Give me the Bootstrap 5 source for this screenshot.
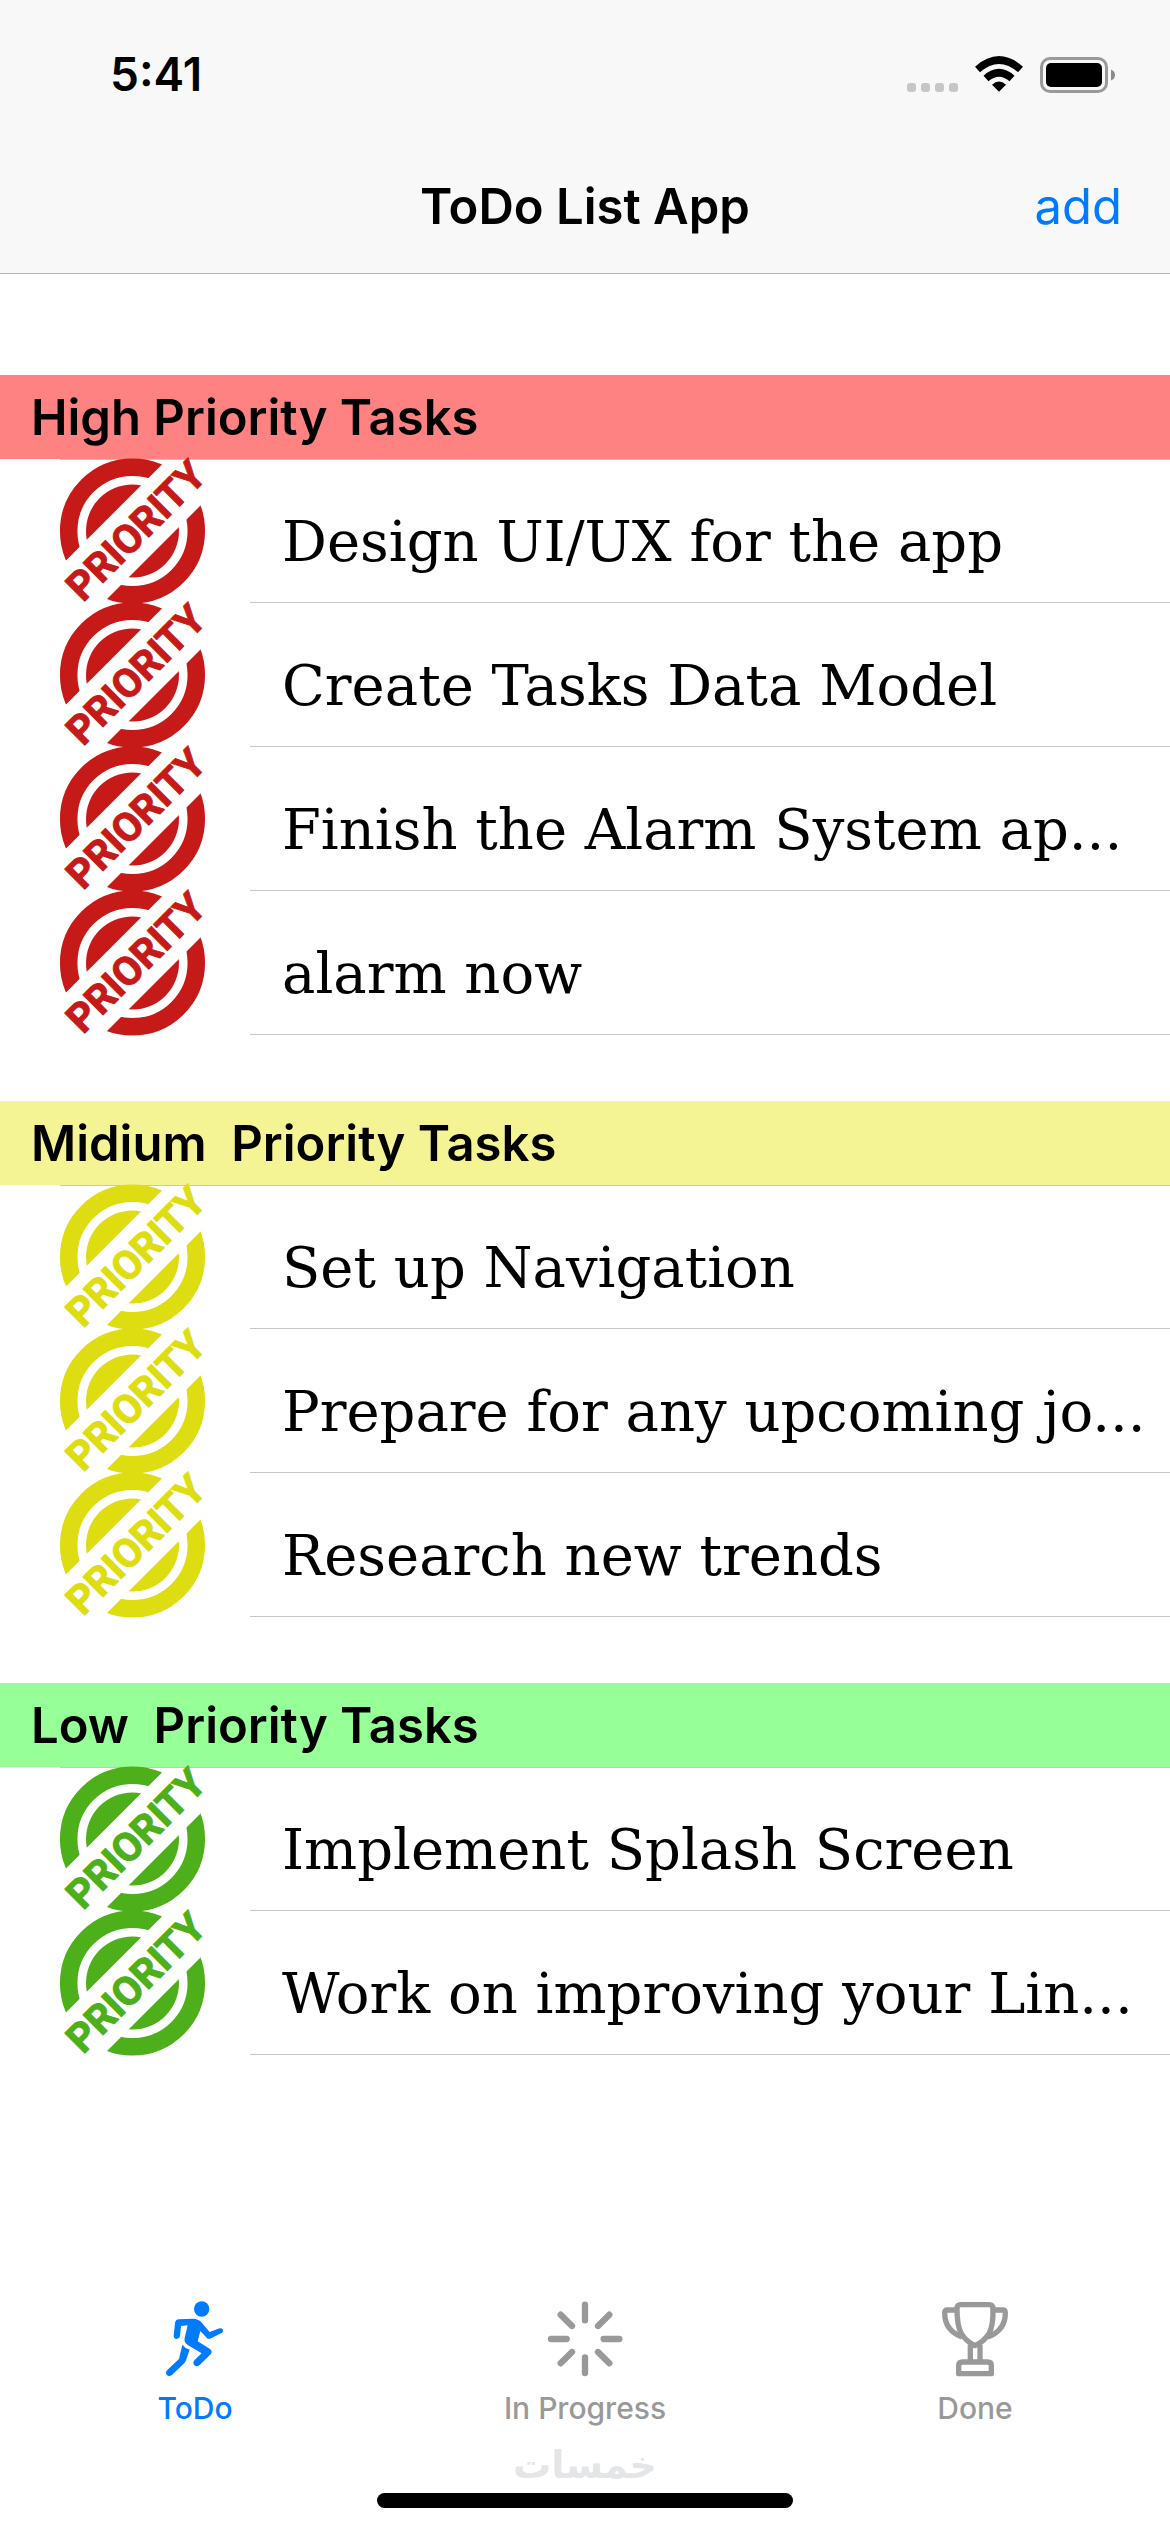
<!DOCTYPE html>
<html lang="en">
<head>
<meta charset="utf-8">
<meta name="viewport" content="width=device-width, initial-scale=1">
<title>ToDo List App</title>
<link href="https://cdn.jsdelivr.net/npm/bootstrap@5.3.0/dist/css/bootstrap.min.css" rel="stylesheet">
<style>
  body { font-family: Inter, "Liberation Sans", sans-serif; color: #000; background: #fff; }
  .app-top { background: #f8f8f8; border-bottom: 1px solid #b2b2b2; }
  .status-bar { height: 141px; padding: 6px 55px 0 110px; font-size: 46px; line-height: 56px; }
  .title-bar { height: 132px; padding: 0 48px; font-size: 49px; line-height: 60px; }
  .title-bar h1, .title-bar .btn { font-size: inherit; line-height: inherit; }
  .title-bar .btn { color: #007aff; }
  .task-lists { padding-top: 101px; gap: 66px; }
  .group-title { padding: 13px 31px 11px; }
  .group-title h2 { font-size: 49px; line-height: 60px; white-space: pre; }
  .level-high .group-title { background: #ff8282; }
  .level-mid .group-title { background: #f5f495; }
  .level-low .group-title { background: #97ff97; }
  .level-high .stamp { color: #c61a18; }
  .level-mid .stamp { color: #dddd12; }
  .level-low .stamp { color: #4daf19; }
  .task { height: 144px; padding-left: 60px; }
  .task:first-child { background: linear-gradient(#c6c6c8, #c6c6c8) no-repeat 60px 0 / 100% 1px; }
  .stamp { width: 145px; height: 144px; flex: none; display: block; overflow: visible; }
  .stamp-word { font: bold 40px Roboto, sans-serif; }
  .task-name { margin-left: 45px; padding: 23px 0 0 32px; border-bottom: 1px solid #c6c6c8;
    font-family: "DejaVu Serif", serif; font-size: 56px; line-height: 120px; }
  .tab-area { padding-bottom: 24px; }
  .tab-area a { padding-top: 18px; gap: 13px; font-size: 30px; line-height: 36px; font-weight: 500; color: #999; }
  .tab-area a.active { color: #007aff; }
  .watermark { font-family: "DejaVu Sans", sans-serif; font-weight: bold; font-size: 38px; line-height: 56px; color: #e4e5e7; margin-top: 11px; }
  .home-bar { width: 416px; height: 15px; background: #000; }
</style>
<script src="https://cdn.jsdelivr.net/npm/bootstrap@5.3.0/dist/js/bootstrap.bundle.min.js"></script>
</head>
<body class="d-flex flex-column min-vh-100">
<svg width="0" height="0" class="position-absolute" aria-hidden="true">
  <defs>
    <clipPath id="sides"><path d="M-40 147.500 L147.500 -40 H-40Z M185 2 L2 185 H185Z"/></clipPath>
    <g id="stamp">
      <g clip-path="url(#sides)">
        <circle cx="72.500" cy="72" r="63.800" fill="none" stroke="currentColor" stroke-width="17.500"/>
        <circle cx="72.500" cy="72" r="46.500" fill="currentColor"/>
      </g>
      <text class="stamp-word" transform="translate(23 144) rotate(-45)" fill="currentColor" stroke="currentColor" stroke-linejoin="round">PRIORITY</text>
    </g>
  </defs>
</svg>

<header class="app-top">
  <div class="status-bar d-flex align-items-center justify-content-between">
    <span class="fw-semibold">5:41</span>
    <div class="d-flex align-items-center">
      <svg width="208" height="38" viewBox="907 54 208 38" aria-hidden="true">
        <g fill="#c6c6c7"><rect x="907" y="82" width="9" height="9" rx="3"/><rect x="921" y="82" width="9" height="9" rx="3"/><rect x="935" y="82" width="9" height="9" rx="3"/><rect x="949" y="82" width="9" height="9" rx="3"/></g>
        <path d="M999 90.700 L992 83.700 Q999 77.500 1006 83.700Z"/>
        <g fill="none" stroke="#000" stroke-width="7.500"><path d="M986 77.500 Q999 66 1012 77.500"/><path d="M977.500 68.500 Q999 49.500 1020.500 68.500"/></g>
        <rect x="1041.500" y="57.500" width="65" height="33" rx="8.500" fill="none" stroke="#999" stroke-width="3"/>
        <rect x="1046" y="62" width="56" height="24" rx="5"/>
        <path d="M1111 68.500 Q1115 70 1115 74 Q1115 78 1111 79.500Z" fill="#8c8c8c"/>
      </svg>
    </div>
  </div>
  <div class="title-bar d-flex align-items-center">
    <div class="col-3"></div>
    <h1 class="col-6 text-center fw-semibold m-0">ToDo List App</h1>
    <div class="col-3 d-flex justify-content-end"><button type="button" class="btn border-0 p-0">add</button></div>
  </div>
</header>

<main class="task-lists d-flex flex-column">
  <section class="level-high">
    <div class="group-title"><h2 class="fw-semibold m-0">High Priority Tasks</h2></div>
    <ul class="list-unstyled m-0">
      <li class="task d-flex"><svg class="stamp"><use href="#stamp"/></svg><div class="task-name flex-fill text-nowrap">Design UI/UX for the app</div></li>
      <li class="task d-flex"><svg class="stamp"><use href="#stamp"/></svg><div class="task-name flex-fill text-nowrap">Create Tasks Data Model</div></li>
      <li class="task d-flex"><svg class="stamp"><use href="#stamp"/></svg><div class="task-name flex-fill text-nowrap">Finish the Alarm System ap...</div></li>
      <li class="task d-flex"><svg class="stamp"><use href="#stamp"/></svg><div class="task-name flex-fill text-nowrap">alarm now</div></li>
    </ul>
  </section>
  <section class="level-mid">
    <div class="group-title"><h2 class="fw-semibold m-0">Midium  Priority Tasks</h2></div>
    <ul class="list-unstyled m-0">
      <li class="task d-flex"><svg class="stamp"><use href="#stamp"/></svg><div class="task-name flex-fill text-nowrap">Set up Navigation</div></li>
      <li class="task d-flex"><svg class="stamp"><use href="#stamp"/></svg><div class="task-name flex-fill text-nowrap">Prepare for any upcoming jo...</div></li>
      <li class="task d-flex"><svg class="stamp"><use href="#stamp"/></svg><div class="task-name flex-fill text-nowrap">Research new trends</div></li>
    </ul>
  </section>
  <section class="level-low">
    <div class="group-title"><h2 class="fw-semibold m-0">Low  Priority Tasks</h2></div>
    <ul class="list-unstyled m-0">
      <li class="task d-flex"><svg class="stamp"><use href="#stamp"/></svg><div class="task-name flex-fill text-nowrap">Implement Splash Screen</div></li>
      <li class="task d-flex"><svg class="stamp"><use href="#stamp"/></svg><div class="task-name flex-fill text-nowrap">Work on improving your Lin...</div></li>
    </ul>
  </section>
</main>

<footer class="tab-area mt-auto d-flex flex-column align-items-center">
  <nav class="row g-0 w-100">
    <a href="#" class="active col d-flex flex-column align-items-center text-decoration-none">
      <svg width="60" height="76" viewBox="106 94 180 228" fill="currentColor" aria-hidden="true">
        <circle cx="216" cy="118" r="23"/>
        <path d="M136 160 Q137 150 148 149 L190 147 Q206 147 215 158 L240 187 L270 176 Q280 174 280 184 Q279 189 274 191 L241 207 Q235 209 231 204 L212 184 L204 215 L241 238 Q250 245 243 254 L210 286 Q202 293 194 287 Q188 280 194 272 L216 251 L174 226 Q162 218 165 205 L174 167 L154 169 L151 200 Q149 208 141 208 Q132 207 132 198Z"/>
        <path d="M158 225 Q166 236 180 240 L169 272 Q167 278 162 282 L126 317 Q119 322 112 317 Q106 309 112 302 L148 268Z"/>
      </svg>
      <span>ToDo</span>
    </a>
    <a href="#" class="col d-flex flex-column align-items-center text-decoration-none">
      <svg width="76" height="76" viewBox="199 92 228 228" fill="none" stroke="currentColor" stroke-width="19" stroke-linecap="round" aria-hidden="true">
        <path d="M313 103V150M313 261V308M211 206H258M369 206H416M240 133L274 167M386 133L352 167M240 279L274 245M386 279L352 245"/>
      </svg>
      <span>In Progress</span>
    </a>
    <a href="#" class="col d-flex flex-column align-items-center text-decoration-none">
      <svg width="68" height="76" viewBox="120 92 204 228" fill="none" stroke="currentColor" stroke-width="16" stroke-linejoin="round" aria-hidden="true">
        <path d="M179 103H264Q276 103 276 115Q277 166 264 190Q248 214 222 226Q196 214 181 190Q168 166 168 115Q168 103 179 103Z"/>
        <path d="M168 119H139Q131 119 131 128Q131 180 183 200M276 119H305Q313 119 313 128Q313 180 261 200"/>
        <path d="M208 224V272M237 224V272"/>
        <path d="M185 275H260Q271 275 271 286V310H173V286Q173 275 185 275Z"/>
      </svg>
      <span>Done</span>
    </a>
  </nav>
  <div class="watermark" lang="ar" dir="rtl">خمسات</div>
  <div class="home-bar rounded-pill"></div>
</footer>
</body>
</html>
